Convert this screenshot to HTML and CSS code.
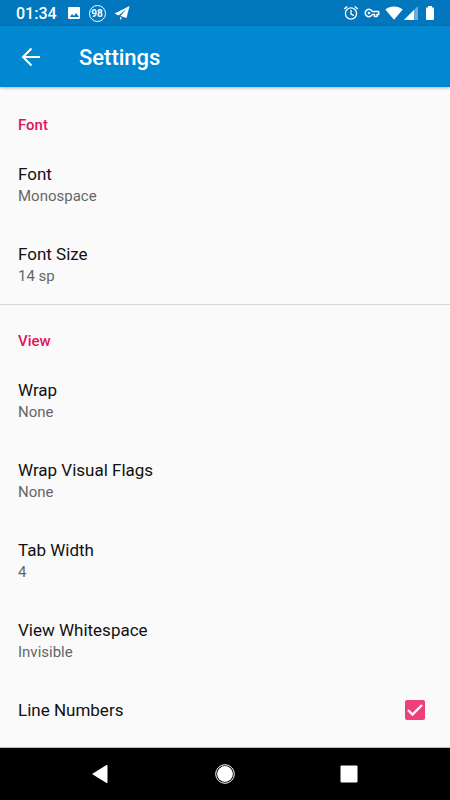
FILE: index.html
```html
<!DOCTYPE html>
<html lang="en">
<head>
<meta charset="utf-8">
<meta name="viewport" content="width=device-width, initial-scale=1">
<title>Settings</title>
<link rel="stylesheet" href="styles.css">
</head>
<body>
<div class="status-bar">
  <div class="status-group">
    <time class="clock">01:34</time>
    <svg class="status-icon picture" viewBox="0 0 14 14" aria-hidden="true"><path fill="#fff" fill-rule="evenodd" d="M2 1h10a1 1 0 0 1 1 1v10a1 1 0 0 1-1 1H2a1 1 0 0 1-1-1V2a1 1 0 0 1 1-1zM3 11h9L9 7l-2 3-2-2z"/></svg>
    <span class="level">98</span>
    <svg class="status-icon plane" viewBox="0 0 16 16" aria-hidden="true"><path fill="#fff" d="M15.500 1 .5 8.500l4 2L12.500 4l-6 7 6 2zM6 12v3l2-2z"/></svg>
  </div>
  <div class="status-group status-right">
    <svg class="status-icon alarm" viewBox="0 0 16 16" aria-hidden="true"><g fill="none" stroke="#fff" stroke-width="1.3"><circle cx="8" cy="8.5" r="5.6"/><path d="M8 5v4l3 1.6M1.2 4l3-2.6M14.800 4l-3-2.600"/></g></svg>
    <svg class="status-icon key" viewBox="0 0 16 16" aria-hidden="true"><path fill="none" stroke="#fff" stroke-width="1.500" stroke-linejoin="round" d="M8.300 6.500A3.700 3.700 0 1 0 8.300 9.500H10.500V11.500H13V9.500H14.700V6.500z"/><circle cx="5" cy="8" r="1.300" fill="#fff"/></svg>
    <svg class="status-icon wifi" viewBox="0 0 18 14" aria-hidden="true"><path fill="#fff" d="M.3 3.500C5-.6 13-.6 17.700 3.500L9 13.700z"/></svg>
    <svg class="status-icon signal" viewBox="0 0 14 14" aria-hidden="true"><path fill="#69acd7" d="M14 0v14H0z"/><path fill="#fff" d="M10 4v10H0z"/></svg>
    <svg class="status-icon battery" viewBox="0 0 10 14" aria-hidden="true"><path fill="#fff" d="M3 0h4v1.500h1.500q.5 0 .5.500v11q0 1-1 1H2q-1 0-1-1V2q0-.5.5-.5H3z"/></svg>
  </div>
</div>

<header class="app-bar">
  <button class="back" type="button" aria-label="Back">
    <svg viewBox="0 0 20 20" aria-hidden="true"><path fill="none" stroke="#fff" stroke-width="2" d="M19 10H3M10.500 1.500 2 10l8.500 8.500"/></svg>
  </button>
  <h1>Settings</h1>
</header>

<main class="settings">
  <section class="group">
    <h2>Font</h2>
    <button class="item" type="button"><span class="title">Font</span><span class="summary">Monospace</span></button>
    <button class="item" type="button"><span class="title">Font Size</span><span class="summary">14 sp</span></button>
  </section>
  <section class="group">
    <h2>View</h2>
    <button class="item" type="button"><span class="title">Wrap</span><span class="summary">None</span></button>
    <button class="item" type="button"><span class="title">Wrap Visual Flags</span><span class="summary">None</span></button>
    <button class="item" type="button"><span class="title">Tab Width</span><span class="summary">4</span></button>
    <button class="item" type="button"><span class="title">View Whitespace</span><span class="summary">Invisible</span></button>
    <div class="item check-item">
      <label class="title" for="line-numbers">Line Numbers</label>
      <span class="check">
        <input type="checkbox" id="line-numbers" checked>
        <svg viewBox="0 0 20 20" aria-hidden="true"><path fill="none" stroke="#fff" stroke-width="2.400" d="m3 10 4.500 4.500L17 5"/></svg>
      </span>
    </div>
  </section>
</main>

<nav class="nav-bar" aria-label="System">
  <button type="button" aria-label="Back"><svg viewBox="0 0 20 20" aria-hidden="true"><path fill="#fff" d="M1 10 15.500 1q1-.3 1 .7v16.600q0 1-1 .7z"/></svg></button>
  <button type="button" aria-label="Home"><svg viewBox="0 0 20 20" aria-hidden="true"><circle cx="10" cy="10" r="9.300" fill="none" stroke="#fff"/><circle cx="10" cy="10" r="7.900" fill="#fff"/></svg></button>
  <button type="button" aria-label="Recent apps"><svg viewBox="0 0 20 20" aria-hidden="true"><rect x="1.500" y="1.500" width="17" height="17" rx="1" fill="#fff"/></svg></button>
</nav>
</body>
</html>
```
FILE: styles.css
```css
* {
  box-sizing: border-box;
}

body {
  display: flex;
  flex-direction: column;
  min-height: 100vh;
  margin: 0;
  background: #fafafa;
  color: #111;
  font-family: Roboto, "Liberation Sans", sans-serif;
}

button {
  border: 0;
  background: none;
  color: inherit;
  font: inherit;
}

svg {
  display: block;
}

.status-bar {
  display: flex;
  justify-content: space-between;
  height: 26px;
  padding: 0 15px 0 16px;
  background: #0277bd;
  color: #fff;
}

.status-group {
  display: flex;
  align-items: center;
}

.clock {
  margin-right: 10px;
  padding-top: 2px;
  font-size: 16px;
  font-weight: 500;
  line-height: 24px;
}

.status-icon {
  flex: none;
  height: 14px;
}

.picture {
  width: 14px;
}

.level {
  width: 17px;
  height: 17px;
  margin: 0 8px;
  border: 1px solid #fff;
  border-radius: 50%;
  font-size: 10px;
  font-weight: 700;
  line-height: 15px;
  text-align: center;
}

.plane {
  width: 16px;
  height: 16px;
}

.alarm {
  width: 16px;
  height: 16px;
  margin-right: 5px;
}

.key {
  width: 16px;
  height: 16px;
  margin-right: 5px;
}

.wifi {
  width: 18px;
}

.signal {
  width: 14px;
  margin: 0 7px 0 1px;
}

.battery {
  width: 10px;
}

.app-bar {
  display: flex;
  align-items: center;
  height: 61px;
  padding-left: 11px;
  background: #0288d1;
  box-shadow: 0 1px 3px rgba(0, 0, 0, 0.3);
  color: #fff;
}

.back {
  width: 40px;
  padding: 10px;
}

.app-bar h1 {
  margin: 0 0 0 28px;
  padding-top: 2px;
  font-size: 22px;
  font-weight: 500;
  line-height: 28px;
}

.settings {
  flex: 1;
  padding-top: 2px;
  border-bottom: 1px solid #bbb;
}

.group + .group {
  box-shadow: 0 -1px #d5d5d5;
}

.group h2 {
  margin: 0;
  padding: 26px 18px 10px;
  color: #e2135f;
  font-size: 15px;
  font-weight: 500;
  line-height: 20px;
}

.item {
  display: flex;
  flex-direction: column;
  justify-content: center;
  width: 100%;
  height: 80px;
  padding: 0 18px 2px;
  text-align: left;
}

.title {
  font-size: 17px;
  line-height: 24px;
}

.summary {
  color: #666;
  font-size: 15px;
  line-height: 20px;
}

.check-item {
  flex-direction: row;
  align-items: center;
  justify-content: space-between;
  height: 58px;
  padding: 0 25px 0 18px;
}

.check {
  position: relative;
}

.check input {
  display: block;
  width: 20px;
  height: 20px;
  margin: 0;
  border-radius: 2px;
  background: #ec407a;
  appearance: none;
}

.check input:not(:checked) {
  border: 2px solid #666;
  background: none;
}

.check svg {
  position: absolute;
  inset: 0;
  pointer-events: none;
}

.check input:not(:checked) + svg {
  display: none;
}

.nav-bar {
  display: flex;
  justify-content: center;
  gap: 84px;
  height: 52px;
  background: #000;
}

.nav-bar button {
  width: 40px;
  padding: 0 10px;
}
```
